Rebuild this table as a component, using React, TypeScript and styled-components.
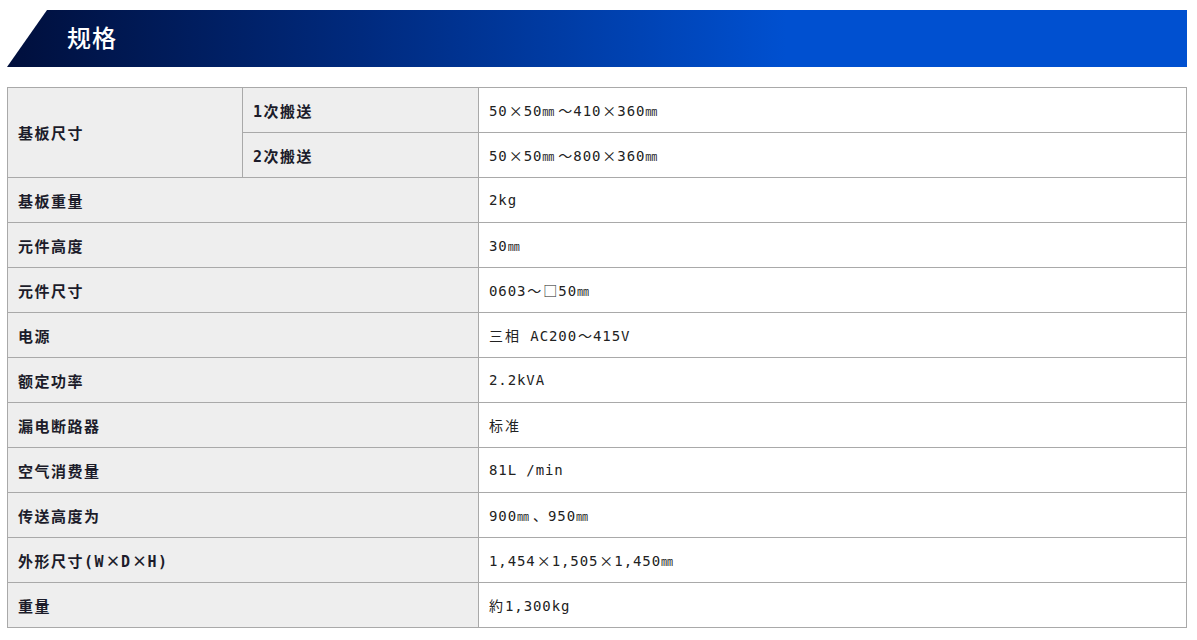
import React from 'react';
import styled, { createGlobalStyle } from 'styled-components';

const GlobalStyle = createGlobalStyle`
  body {
    margin: 0;
    background: #fff;
    font-family: "Noto Sans CJK SC", "Noto Sans", sans-serif;
  }
`;

const Page = styled.div`
  width: 1180px;
  padding: 10px 0 0 7px;
`;

const TitleBar = styled.div`
  height: 57px;
  display: flex;
  align-items: center;
  padding-left: 60px;
  background: linear-gradient(90deg, #000f3c 0%, #002a7e 30%, #0050d0 66%, #0050d0 100%);
  clip-path: polygon(40px 0, 100% 0, 100% 100%, 0 100%);
`;

const Title = styled.h2`
  margin: 0 0 4px;
  color: #fff;
  font-size: 24px;
  line-height: 1;
  font-weight: 500;
  letter-spacing: 1px;
`;

const SpecTable = styled.table`
  margin-top: 20px;
  width: 1180px;
  border-collapse: collapse;
  table-layout: fixed;
`;

const Label = styled.th`
  height: 44px;
  padding: 0 10px;
  border: 1px solid #a9a9a9;
  background: #eeeeee;
  color: #1c1c2a;
  font-family: "DejaVu Sans Mono", "Noto Sans CJK SC", monospace;
  font-size: 15px;
  letter-spacing: 1.5px;
  font-weight: 700;
  text-align: left;
  vertical-align: middle;
`;

const Value = styled.td`
  height: 44px;
  padding: 0 10px;
  border: 1px solid #a9a9a9;
  background: #fff;
  color: #222;
  font-family: "DejaVu Sans Mono", "Noto Sans CJK JP", monospace;
  font-size: 14px;
  letter-spacing: 0.9px;
  vertical-align: middle;
`;

const Cjk = styled.span`
  font-family: "Noto Sans CJK JP", sans-serif;
  letter-spacing: 2px;
`;

const Wide = styled.span`
  display: inline-block;
  width: 16px;
  text-align: center;
  font-family: "Noto Sans CJK JP", sans-serif;
  letter-spacing: 0;
`;

const Unit = styled.span`
  display: inline-block;
  width: 15px;
  font-family: "Noto Sans CJK JP", sans-serif;
  font-size: 12px;
  letter-spacing: 0;
`;

const x = <Wide>×</Wide>;
const mm = <Unit>㎜</Unit>;
const tilde = <Wide>～</Wide>;

const rows: { label: React.ReactNode; key: string; value: React.ReactNode }[] = [
  { key: 'w', label: '基板重量', value: '2kg' },
  { key: 'h', label: '元件高度', value: <>30{mm}</> },
  { key: 's', label: '元件尺寸', value: <>0603{tilde}<Wide>□</Wide>50{mm}</> },
  { key: 'p', label: '电源', value: <><Cjk>三相</Cjk> AC200{tilde}415V</> },
  { key: 'r', label: '额定功率', value: '2.2kVA' },
  { key: 'b', label: '漏电断路器', value: <Cjk>标准</Cjk> },
  { key: 'a', label: '空气消费量', value: '81L /min' },
  { key: 'c', label: '传送高度为', value: <>900{mm}<Wide>、</Wide>950{mm}</> },
  { key: 'd', label: <>外形尺寸(W{x}D{x}H)</>, value: <>1,454{x}1,505{x}1,450{mm}</> },
  { key: 'm', label: '重量', value: <><Cjk>約</Cjk>1,300kg</> },
];

const App = () => (
  <Page>
    <GlobalStyle />
    <TitleBar>
      <Title>规格</Title>
    </TitleBar>
    <SpecTable>
      <colgroup>
        <col style={{ width: 235 }} />
        <col style={{ width: 236 }} />
        <col />
      </colgroup>
      <tbody>
        <tr>
          <Label rowSpan={2}>基板尺寸</Label>
          <Label>1次搬送</Label>
          <Value>50{x}50{mm}{tilde}410{x}360{mm}</Value>
        </tr>
        <tr>
          <Label>2次搬送</Label>
          <Value>50{x}50{mm}{tilde}800{x}360{mm}</Value>
        </tr>
        {rows.map((row) => (
          <tr key={row.key}>
            <Label colSpan={2}>{row.label}</Label>
            <Value>{row.value}</Value>
          </tr>
        ))}
      </tbody>
    </SpecTable>
  </Page>
);

export default App;
